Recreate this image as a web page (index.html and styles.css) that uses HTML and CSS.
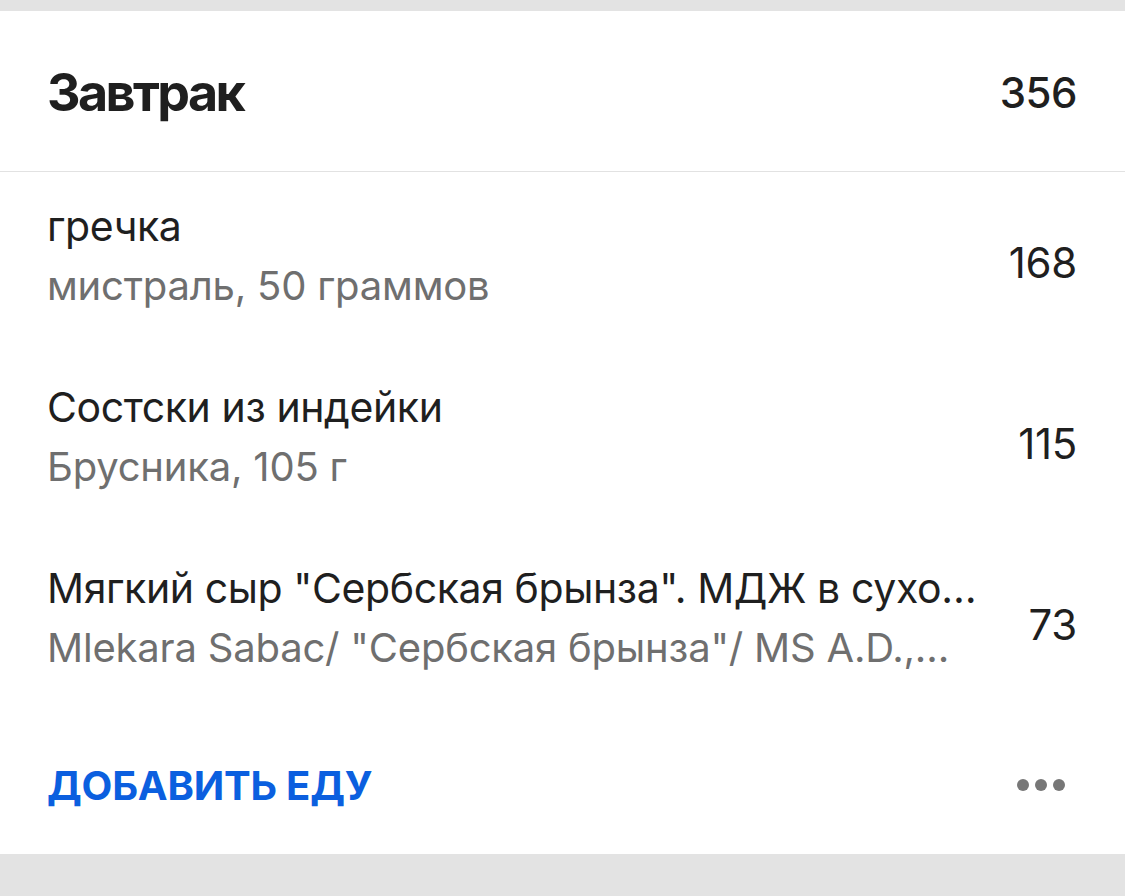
FILE: index.html
```html
<!DOCTYPE html>
<html lang="ru">
<head>
<meta charset="utf-8">
<title>Завтрак</title>
<link rel="stylesheet" href="styles.css">
</head>
<body>
<div class="page">
  <section class="meal">
    <header class="meal-head">
      <h1 class="meal-title">Завтрак</h1>
      <span class="meal-total">356</span>
    </header>
    <ul class="items">
      <li class="item">
        <div class="item-text">
          <div class="item-name">гречка</div>
          <div class="item-sub">мистраль, 50 граммов</div>
        </div>
        <span class="item-kcal">168</span>
      </li>
      <li class="item">
        <div class="item-text">
          <div class="item-name">Состски из индейки</div>
          <div class="item-sub">Брусника, 105 г</div>
        </div>
        <span class="item-kcal">115</span>
      </li>
      <li class="item">
        <div class="item-text">
          <div class="item-name">Мягкий сыр "Сербская брынза". МДЖ в сухо…</div>
          <div class="item-sub">Mlekara Sabac/ "Сербская брынза"/ MS A.D.,…</div>
        </div>
        <span class="item-kcal">73</span>
      </li>
    </ul>
    <footer class="meal-foot">
      <span class="add-food">ДОБАВИТЬ ЕДУ</span>
      <span class="more" aria-label="Ещё"><i></i><i></i><i></i></span>
    </footer>
  </section>
</div>
</body>
</html>
```

FILE: styles.css
```css
html, body {
  margin: 0;
  padding: 0;
  background: #e3e3e3;
}
body {
  font-family: Inter, "Noto Sans", "Liberation Sans", sans-serif;
  color: #1f1f1f;
}
.page {
  padding: 11px 0 41px;
}
.meal {
  background: #ffffff;
}
.meal-head {
  height: 161px;
  box-sizing: border-box;
  padding: 4px 48px 0 47px;
  display: flex;
  align-items: center;
  justify-content: space-between;
  border-bottom: 1px solid #e2e2e2;
}
.meal-title {
  margin: 0;
  font-size: 52px;
  font-weight: 700;
  line-height: 60px;
  color: #1f1f1f;
  letter-spacing: -2.6px;
}
.meal-total {
  font-size: 42px;
  font-weight: 500;
  line-height: 50px;
  color: #1f1f1f;
  letter-spacing: -0.5px;
}
.items {
  list-style: none;
  margin: 0;
  padding: 0;
}
.item {
  height: 181px;
  box-sizing: border-box;
  padding: 0 48px 0 47px;
  display: flex;
  align-items: center;
  gap: 40px;
}
.item-text {
  flex: 1;
  min-width: 0;
  align-self: flex-start;
  padding-top: 25px;
}
.item-name,
.item-sub {
  white-space: nowrap;
  overflow: hidden;
  text-overflow: ellipsis;
}
.item-name {
  font-size: 41px;
  line-height: 59px;
  color: #1f1f1f;
  letter-spacing: -0.4px;
}
.item-sub {
  font-size: 40px;
  line-height: 59px;
  color: #6f6f6f;
  letter-spacing: -0.2px;
}
.item-kcal {
  flex: none;
  font-size: 42px;
  line-height: 50px;
  color: #1f1f1f;
  letter-spacing: -0.3px;
}
.meal-foot {
  height: 139px;
  box-sizing: border-box;
  padding: 2px 60px 0 47px;
  display: flex;
  align-items: center;
  justify-content: space-between;
}
.add-food {
  font-size: 40px;
  font-weight: 700;
  line-height: 50px;
  color: #0b5fdf;
  letter-spacing: -0.2px;
}
.more {
  display: flex;
  gap: 6px;
  margin-top: -2px;
}
.more i {
  width: 12px;
  height: 12px;
  border-radius: 50%;
  background: #777777;
}
```
